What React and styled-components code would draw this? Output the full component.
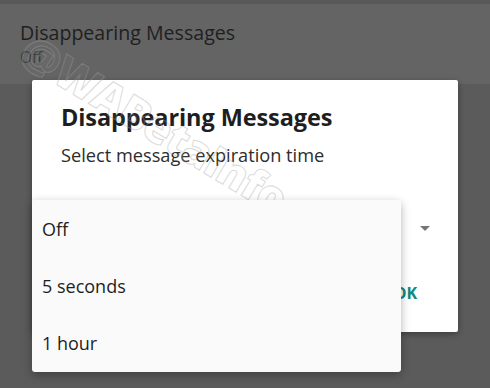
import React from "react";
import styled, { createGlobalStyle } from "styled-components";

const Global = createGlobalStyle`
  html, body { margin: 0; padding: 0; }
  body { font-family: "Open Sans", "Noto Sans", sans-serif; background: #5b5b5b; }
`;

const Screen = styled.div`
  position: relative;
  width: 490px;
  height: 388px;
  overflow: hidden;
  background: #5b5b5b;
  display: flex;
  flex-direction: column;
`;

const TopStrip = styled.div`
  height: 4px;
  background: #595959;
`;

const SettingRow = styled.div`
  height: 80px;
  background: #646464;
  padding: 17px 20px 0;
  box-sizing: border-box;
  display: flex;
  flex-direction: column;
`;

const SettingTitle = styled.div`
  font-size: 19.6px;
  line-height: 24px;
  color: #1f1f1f;
`;

const SettingSub = styled.div`
  margin-top: 2px;
  font-size: 15.5px;
  line-height: 20px;
  color: #3a3a3a;
`;

const Dialog = styled.div`
  position: absolute;
  left: 32px;
  top: 80px;
  width: 426px;
  height: 252px;
  background: #ffffff;
  border-radius: 2px;
  box-shadow: 0 2px 6px rgba(0, 0, 0, 0.35);
  box-sizing: border-box;
  padding: 22px 29px 0 29px;
  display: flex;
  flex-direction: column;
`;

const DialogTitle = styled.div`
  font-size: 23.5px;
  line-height: 30px;
  font-weight: 700;
  color: #1e1e1e;
  letter-spacing: -0.1px;
`;

const DialogText = styled.div`
  margin-top: 11px;
  font-size: 18.2px;
  line-height: 24px;
  color: #2c2c2c;
`;

const SpinnerRow = styled.div`
  margin-top: 49px;
  height: 24px;
  display: flex;
  justify-content: flex-end;
  align-items: center;
`;

const Arrow = styled.div`
  width: 0;
  height: 0;
  border-left: 5px solid transparent;
  border-right: 5px solid transparent;
  border-top: 5px solid #767676;
  margin-right: -1px;
`;

const Actions = styled.div`
  margin-top: 43px;
  display: flex;
  justify-content: flex-end;
  padding-right: 12px;
`;

const OkButton = styled.div`
  font-size: 16px;
  font-weight: 700;
  color: #0e8a7c;
  line-height: 20px;
`;

const Dropdown = styled.div`
  position: absolute;
  left: 32px;
  top: 200px;
  width: 369px;
  height: 172px;
  background: #fafafa;
  border-radius: 3px;
  box-shadow: 0 3px 10px rgba(0, 0, 0, 0.3);
  display: flex;
  flex-direction: column;
`;

const Option = styled.div`
  height: 57.3px;
  display: flex;
  align-items: center;
  padding-left: 10px;
  font-size: 18px;
  color: #1e1e1e;
`;

const Watermark = styled.div`
  position: absolute;
  left: 40px;
  top: 22px;
  transform-origin: 0 0;
  transform: rotate(31deg);
  font-family: "Open Sans", sans-serif;
  font-weight: 800;
  font-size: 44px;
  line-height: 56px;
  letter-spacing: -1px;
  color: rgba(255, 255, 255, 0.04);
  -webkit-text-stroke: 1.1px rgba(160, 160, 160, 0.38);
  pointer-events: none;
  white-space: nowrap;
`;

export default function App() {
  const options = ["Off", "5 seconds", "1 hour"];
  return (
    <>
      <Global />
      <Screen>
        <TopStrip />
        <SettingRow>
          <SettingTitle>Disappearing Messages</SettingTitle>
          <SettingSub>Off</SettingSub>
        </SettingRow>
        <Dialog>
          <DialogTitle>Disappearing Messages</DialogTitle>
          <DialogText>Select message expiration time</DialogText>
          <SpinnerRow>
            <Arrow />
          </SpinnerRow>
          <Actions>
            <OkButton>OK</OkButton>
          </Actions>
        </Dialog>
        <Watermark>@WABetaInfo</Watermark>
        <Dropdown>
          {options.map((o) => (
            <Option key={o}>{o}</Option>
          ))}
        </Dropdown>
      </Screen>
    </>
  );
}
